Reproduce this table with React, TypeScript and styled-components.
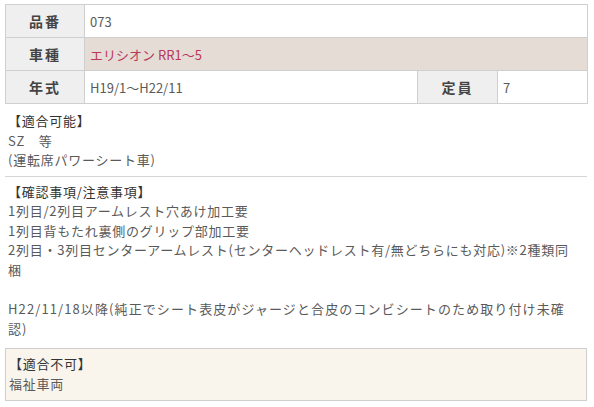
import styled, { createGlobalStyle } from "styled-components";

const GlobalStyle = createGlobalStyle`
  body {
    margin: 0;
    background: #fff;
    font-family: "Noto Sans CJK JP", "Noto Sans", sans-serif;
    font-size: 13px;
    color: #5a5a5a;
  }
`;

const Page = styled.div`
  width: 594px;
  padding: 4px 7px 0 5px;
  box-sizing: border-box;
`;

const SpecTable = styled.table`
  width: 582px;
  border-collapse: collapse;
  table-layout: fixed;
`;

const Row = styled.tr<{ $tinted?: boolean }>`
  height: 33px;
  background: ${(p) => (p.$tinted ? "#e4dcd5" : "#fff")};
`;

const Label = styled.th`
  background: #efefef;
  border: 1px solid #cfcfcf;
  color: #444;
  font-weight: bold;
  font-size: 14px;
  letter-spacing: 2px;
  text-align: center;
  padding: 0;
`;

const Value = styled.td<{ $red?: boolean }>`
  border: 1px solid #cfcfcf;
  padding: 0 0 0 5px;
  color: ${(p) => (p.$red ? "#b8385a" : "#5a5a5a")};
  font-size: 13px;
`;

const Section = styled.div<{ $gapTop?: number }>`
  width: 566px;
  padding: ${(p) => p.$gapTop ?? 7}px 0 6px 3px;
  line-height: 19.5px;
  letter-spacing: 0.75px;
`;

// the last note needs a little more tracking to wrap where the original does
const Line = styled.div<{ $loose?: boolean }>`
  letter-spacing: ${(p) => (p.$loose ? "1.1px" : "inherit")};
`;

const Heading = styled.div`
  color: #333;
`;

const Divider = styled.hr`
  margin: 0;
  border: none;
  border-top: 1px solid #d6d6d6;
  width: 582px;
`;

const Blank = styled.div`
  height: 20px;
`;

const NgBox = styled.div`
  margin-top: 4px;
  width: 582px;
  box-sizing: border-box;
  background: #faf5ec;
  border: 1px solid #cfcfcf;
  padding: 5px 3px 7px;
  line-height: 19.5px;
  letter-spacing: 0.75px;
`;

export default function App() {
  return (
    <>
      <GlobalStyle />
      <Page>
        <SpecTable>
          <colgroup>
            <col style={{ width: 79 }} />
            <col style={{ width: 333 }} />
            <col style={{ width: 80 }} />
            <col style={{ width: 90 }} />
          </colgroup>
          <tbody>
            <Row>
              <Label>品番</Label>
              <Value colSpan={3}>073</Value>
            </Row>
            <Row $tinted>
              <Label>車種</Label>
              <Value $red colSpan={3}>エリシオン RR1～5</Value>
            </Row>
            <Row>
              <Label>年式</Label>
              <Value>H19/1～H22/11</Value>
              <Label>定員</Label>
              <Value>7</Value>
            </Row>
          </tbody>
        </SpecTable>

        <Section>
          <Heading>【適合可能】</Heading>
          <Line>SZ　等</Line>
          <Line>(運転席パワーシート車)</Line>
        </Section>
        <Divider />
        <Section $gapTop={5}>
          <Heading>【確認事項/注意事項】</Heading>
          <Line>1列目/2列目アームレスト穴あけ加工要</Line>
          <Line>1列目背もたれ裏側のグリップ部加工要</Line>
          <Line>
            2列目・3列目センターアームレスト(センターヘッドレスト有/無どちらにも対応)※2種類同梱
          </Line>
          <Blank />
          <Line $loose>
            H22/11/18以降(純正でシート表皮がジャージと合皮のコンビシートのため取り付け未確認)
          </Line>
        </Section>
        <NgBox>
          <Heading>【適合不可】</Heading>
          <Line>福祉車両</Line>
        </NgBox>
      </Page>
    </>
  );
}
